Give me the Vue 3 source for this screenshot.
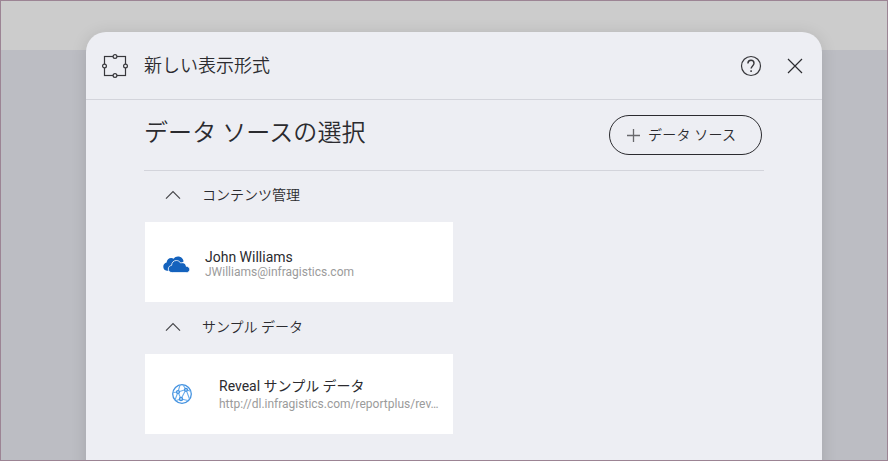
<script setup>
const sections = [
  {
    title: 'コンテンツ管理',
    item: { icon: 'cloud', name: 'John Williams', detail: 'JWilliams@infragistics.com' },
  },
  {
    title: 'サンプル データ',
    item: { icon: 'globe', name: 'Reveal サンプル データ', detail: 'http://dl.infragistics.com/reportplus/rev…' },
  },
]
</script>

<template>
  <div class="page">
    <main class="dialog">
      <header class="titlebar">
        <svg class="frame-icon" width="28" height="26" viewBox="0 0 28 26" fill="none" stroke="#37373b">
          <rect x="3.5" y="3.5" width="21" height="19" stroke-width="1.2" />
          <g fill="#edeef3" stroke-width="1.2">
            <circle cx="14" cy="3.5" r="1.9" />
            <circle cx="14" cy="22.5" r="1.9" />
            <circle cx="3.5" cy="13" r="1.9" />
            <circle cx="24.5" cy="13" r="1.9" />
          </g>
        </svg>
        <h1>新しい表示形式</h1>
        <svg class="help" width="22" height="22" viewBox="0 0 22 22" fill="none" stroke="#37373b" stroke-width="1.2">
          <circle cx="11" cy="11" r="9.5" />
          <path d="M7.900 8.500C7.900 6.500 9.100 5.300 11 5.300s3 1.200 3 3c0 2.400-2.900 2.800-2.900 5.300" stroke-width="1.400" />
          <path d="M11.100 15.200v1.700" stroke-width="1.500" />
        </svg>
        <svg class="close" width="16" height="16" viewBox="0 0 16 16" fill="none" stroke="#2c2c30" stroke-width="1.2">
          <path d="M1 1l14 14M15 1L1 15" />
        </svg>
      </header>
      <div class="content">
        <div class="heading">
          <h2>データ ソースの選択</h2>
          <button>
            <svg width="13" height="13" viewBox="0 0 13 13" stroke="#68686c" stroke-width="1.3">
              <path d="M6.5 0v13M0 6.5h13" />
            </svg>
            <span>データ ソース</span>
          </button>
        </div>
        <section v-for="s in sections" :key="s.title">
          <h3>
            <svg width="16" height="10" viewBox="0 0 16 10" fill="none" stroke="#46464a" stroke-width="1.2">
              <path d="M1 8.7L8 1.5l7 7.2" />
            </svg>
            <span>{{ s.title }}</span>
          </h3>
          <div class="card" :class="s.item.icon">
            <svg v-if="s.item.icon === 'cloud'" width="27" height="17" viewBox="0 0 27 17">
              <path fill="#1462bd" d="M5 14.7H3.9C1.6 14.4.3 12.8.3 10.7c0-2.2 1.4-3.7 3.3-4.1C3.7 3.7 5.8 2 8.2 2c1 0 1.8.2 2.5.7C11.7 1.1 13.1.4 15 .4c3.1 0 5.3 2.1 5.6 5.1z" />
              <path fill="#1462bd" stroke="#fff" stroke-width=".8" d="M9.2 16.600c-2.300 0-3.900-1.600-3.900-3.600s1.400-3.400 3.300-3.600C8.700 6.500 10.700 4.500 13.300 4.500c2 0 3.500 1 4.300 2.500 2.900-1 5.400.8 5.600 3.300 2 .1 3.500 1.300 3.500 3.100 0 1.900-1.400 3.200-3.300 3.200z" />
            </svg>
            <svg v-else width="22" height="22" viewBox="0 0 22 22" fill="none" stroke="#4492e0">
              <circle cx="11" cy="11" r="9.3" stroke-width="1.3" />
              <path stroke="#69adeb" stroke-width="1.1" d="M2 9.500L7 9l8-2.500M7 9l3 7 5-9.500L12 2M7 9L9 2M15 6.500l5 2M7 9L4 17M10 16l-5 1.500M10 16l7 1.500M15 6.500l3.500 9.500" />
              <g fill="#a9d3f8" stroke-width="1.200">
                <circle cx="7" cy="9" r="1.500" />
                <circle cx="15" cy="6.800" r="1.500" />
                <circle cx="10" cy="16" r="1.600" />
              </g>
            </svg>
            <div class="labels">
              <div class="name">{{ s.item.name }}</div>
              <div class="detail">{{ s.item.detail }}</div>
            </div>
          </div>
        </section>
      </div>
    </main>
  </div>
</template>

<style>
body { margin: 0; }
</style>

<style scoped>
* { box-sizing: border-box; }
.page {
  width: 888px;
  height: 461px;
  overflow: hidden;
  border: 1px solid #9c8494;
  padding: 31px 65px 0 85px;
  background: linear-gradient(#cccccc 49px, #bcbdc3 49px);
  font-family: Roboto, "Noto Sans CJK JP", sans-serif;
  color: #2b2b2f;
}
.dialog {
  height: 460px;
  border-radius: 20px 20px 0 0;
  background: #edeef3;
  box-shadow: 0 2px 16px rgba(0, 0, 0, .13);
}
.titlebar {
  height: 68px;
  display: flex;
  align-items: center;
  padding: 0 19px 0 15px;
  border-bottom: 1px solid #d3d4db;
}
h1, h2, h3 { margin: 0; font-weight: 350; white-space: nowrap; }
h1 { flex: 1; margin-left: 15px; font-size: 18px; line-height: 24px; }
.close { margin-left: 25px; }
.content { padding: 0 58px; }
.heading {
  height: 71px;
  display: flex;
  align-items: center;
  justify-content: space-between;
  padding-right: 2px;
  border-bottom: 1px solid #d3d4db;
}
h2 { font-size: 24px; line-height: 32px; padding-bottom: 4px; letter-spacing: .1px; }
button {
  width: 153px;
  height: 40px;
  display: flex;
  align-items: center;
  gap: 8px;
  padding: 0 0 0 17px;
  border: 1px solid #2b2b2f;
  border-radius: 20px;
  background: transparent;
  color: inherit;
  font: 350 14px/20px Roboto, "Noto Sans CJK JP", sans-serif;
  letter-spacing: .2px;
}
h3 {
  height: 51px;
  display: flex;
  align-items: center;
  gap: 21px;
  padding: 0 0 3px 21px;
  font-size: 14px;
  line-height: 20px;
}
section + section h3 { height: 52px; padding-bottom: 2px; }
.card {
  width: 308px;
  height: 80px;
  margin-left: 1px;
  display: flex;
  align-items: center;
  background: #fff;
}
.cloud { padding: 4px 14px 0 18px; gap: 15px; }
.globe { padding: 0 10px 0 26px; gap: 26px; }
.labels { min-width: 0; flex: 1; }
.name { font-size: 14px; line-height: 16px; white-space: nowrap; }
.detail {
  color: #9b9b9b;
  font-size: 12px;
  line-height: 14px;
  white-space: nowrap;
}
.globe .labels { padding-top: 1px; }
.globe .name { line-height: 20px; }
.globe .detail { line-height: 17px; }
</style>
